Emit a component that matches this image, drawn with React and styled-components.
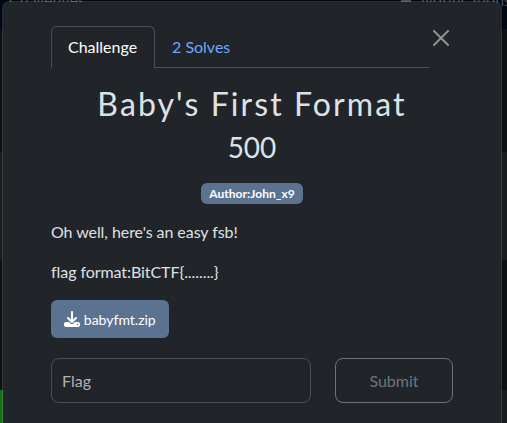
import React from "react";
import styled, { createGlobalStyle } from "styled-components";

const GlobalStyle = createGlobalStyle`
  *, *::before, *::after { box-sizing: border-box; }
  body { margin: 0; background: #0f1113; font-family: Lato, sans-serif; font-size: 16px; line-height: 1.5; color: #dee2e6; overflow: hidden; }
  h2, h3, p { margin: 0; font-weight: 400; }
`;

const Screen = styled.div`
  position: relative;
  width: 507px;
  height: 423px;
  overflow: hidden;
`;
const Backdrop = styled.div`
  display: flex;
  flex-direction: column;
  height: 100%;
`;
const Navbar = styled.div`
  display: flex;
  justify-content: space-between;
  height: 29px;
  background: #000814;
  color: #4a4d51;
  line-height: 24px;
  padding: 0 0 0 9px;
`;
const NavItem = styled.span`
  display: flex;
  align-items: center;
  gap: 10px;
  height: 24px;
  margin-top: -12px;
  margin-right: -4px;
  white-space: nowrap;
`;
const NavMark = styled.i`
  width: 10px;
  height: 12px;
  margin-top: 2px;
  background: #4a4d51;
`;
const Card = styled.div`
  flex: none;
  height: ${(p) => p.$height}px;
  margin-top: ${(p) => p.$gap}px;
  background: ${(p) => p.$color || "#171c1f"};
`;

const Modal = styled.section`
  position: absolute;
  top: 1px;
  left: 2px;
  width: 500px;
  height: 440px;
  padding: 24px 48px;
  background: #212529;
  background-clip: padding-box;
  border: 1px solid rgba(255, 255, 255, 0.15);
  border-radius: 8px;
`;
const Header = styled.div`
  display: flex;
  align-items: flex-start;
  justify-content: space-between;
`;
const Tabs = styled.nav`
  display: flex;
  width: 378px;
  height: 42px;
  border-bottom: 1px solid #495057;
`;
const Tab = styled.a`
  height: 42px;
  padding: 8px 16px;
  border: 1px solid ${(p) => (p.$active ? "#495057" : "transparent")};
  border-bottom-color: ${(p) => (p.$active ? "#212529" : "transparent")};
  border-radius: 6px 6px 0 0;
  color: ${(p) => (p.$active ? "#fff" : "#6ea8fe")};
  &:first-child { width: 104px; }
`;
const Close = styled.button`
  display: flex;
  padding: 4px;
  border: 0;
  background: none;
  color: #909294;
`;
const Title = styled.h2`
  margin-top: 17px;
  font-size: 32px;
  line-height: 38.4px;
  letter-spacing: 2.1px;
  text-align: center;
`;
const Points = styled.h3`
  margin-top: 8px;
  font-size: 28px;
  line-height: 33.6px;
  text-align: center;
`;
const Tags = styled.div`
  display: flex;
  justify-content: center;
  margin-top: 18px;
`;
const Badge = styled.span`
  height: 21px;
  width: 102px;
  padding-top: 5px;
  text-align: center;
  border-radius: 6px;
  background: #5b7290;
  color: #fff;
  font-size: 12px;
  font-weight: 700;
  line-height: 12px;
  letter-spacing: 0.06px;
`;
const Description = styled.p`
  margin-top: 16px;
  letter-spacing: -0.07px;
`;
const Download = styled.button`
  display: flex;
  align-items: center;
  justify-content: center;
  gap: 3.5px;
  width: 118px;
  height: 38px;
  margin-top: 16px;
  border: 0;
  border-radius: 6px;
  background: #5b7290;
  color: #fff;
  font: 14px/21px Lato, sans-serif;
`;
const Form = styled.form`
  display: flex;
  gap: 24px;
  margin-top: 20px;
`;
const FlagInput = styled.input`
  width: 260px;
  height: 45px;
  padding: 0 10px;
  border: 1px solid #495057;
  border-radius: 8px;
  background: #212529;
  font: 16px Lato, sans-serif;
  &::placeholder { color: #b0b4b8; opacity: 1; }
`;
const Submit = styled.button`
  width: 118px;
  height: 45px;
  padding: 0;
  border: 1px solid #6c757d;
  border-radius: 8px;
  background: none;
  color: #6c757d;
  font: 16px Lato, sans-serif;
`;

const CloseIcon = () => (
  <svg width="16" height="16" viewBox="0 0 16 16" stroke="currentColor" strokeWidth="2" strokeLinecap="round">
    <path d="M1 1 15 15M15 1 1 15" />
  </svg>
);
const DownloadIcon = () => (
  <svg width="16" height="16" viewBox="0 0 512 512" fill="currentColor">
    <path d="M288 32c0-17.700-14.300-32-32-32s-32 14.300-32 32v242.700l-73.400-73.400c-12.500-12.500-32.800-12.500-45.300 0s-12.500 32.800 0 45.300l128 128c12.500 12.500 32.800 12.500 45.300 0l128-128c12.500-12.500 12.500-32.800 0-45.300s-32.800-12.500-45.300 0L288 274.700V32zM64 352c-35.300 0-64 28.700-64 64v32c0 35.300 28.700 64 64 64h384c35.300 0 64-28.700 64-64v-32c0-35.300-28.700-64-64-64H346.500l-45.300 45.300c-25 25-65.500 25-90.500 0L165.500 352H64zm368 56a24 24 0 1 1 0 48 24 24 0 1 1 0-48z" />
  </svg>
);

export default function App() {
  return (
    <Screen>
      <GlobalStyle />
      <Backdrop>
        <Navbar>
          <NavItem>Challenges</NavItem>
          <NavItem><NavMark />Notifications</NavItem>
        </Navbar>
        <Card $gap={123} $height={108} />
        <Card $gap={130} $height={33} $color="linear-gradient(90deg, #14701a 50%, #171c1f 50%)" />
      </Backdrop>
      <Modal role="dialog">
        <Header>
          <Tabs>
            <Tab $active>Challenge</Tab>
            <Tab>2 Solves</Tab>
          </Tabs>
          <Close aria-label="Close"><CloseIcon /></Close>
        </Header>
        <Title>Baby's First Format</Title>
        <Points>500</Points>
        <Tags><Badge>Author:John_x9</Badge></Tags>
        <Description>Oh well, here's an easy fsb!</Description>
        <Description>flag format:BitCTF{"{........}"}</Description>
        <Download><DownloadIcon />babyfmt.zip</Download>
        <Form>
          <FlagInput placeholder="Flag" />
          <Submit type="button">Submit</Submit>
        </Form>
      </Modal>
    </Screen>
  );
}
